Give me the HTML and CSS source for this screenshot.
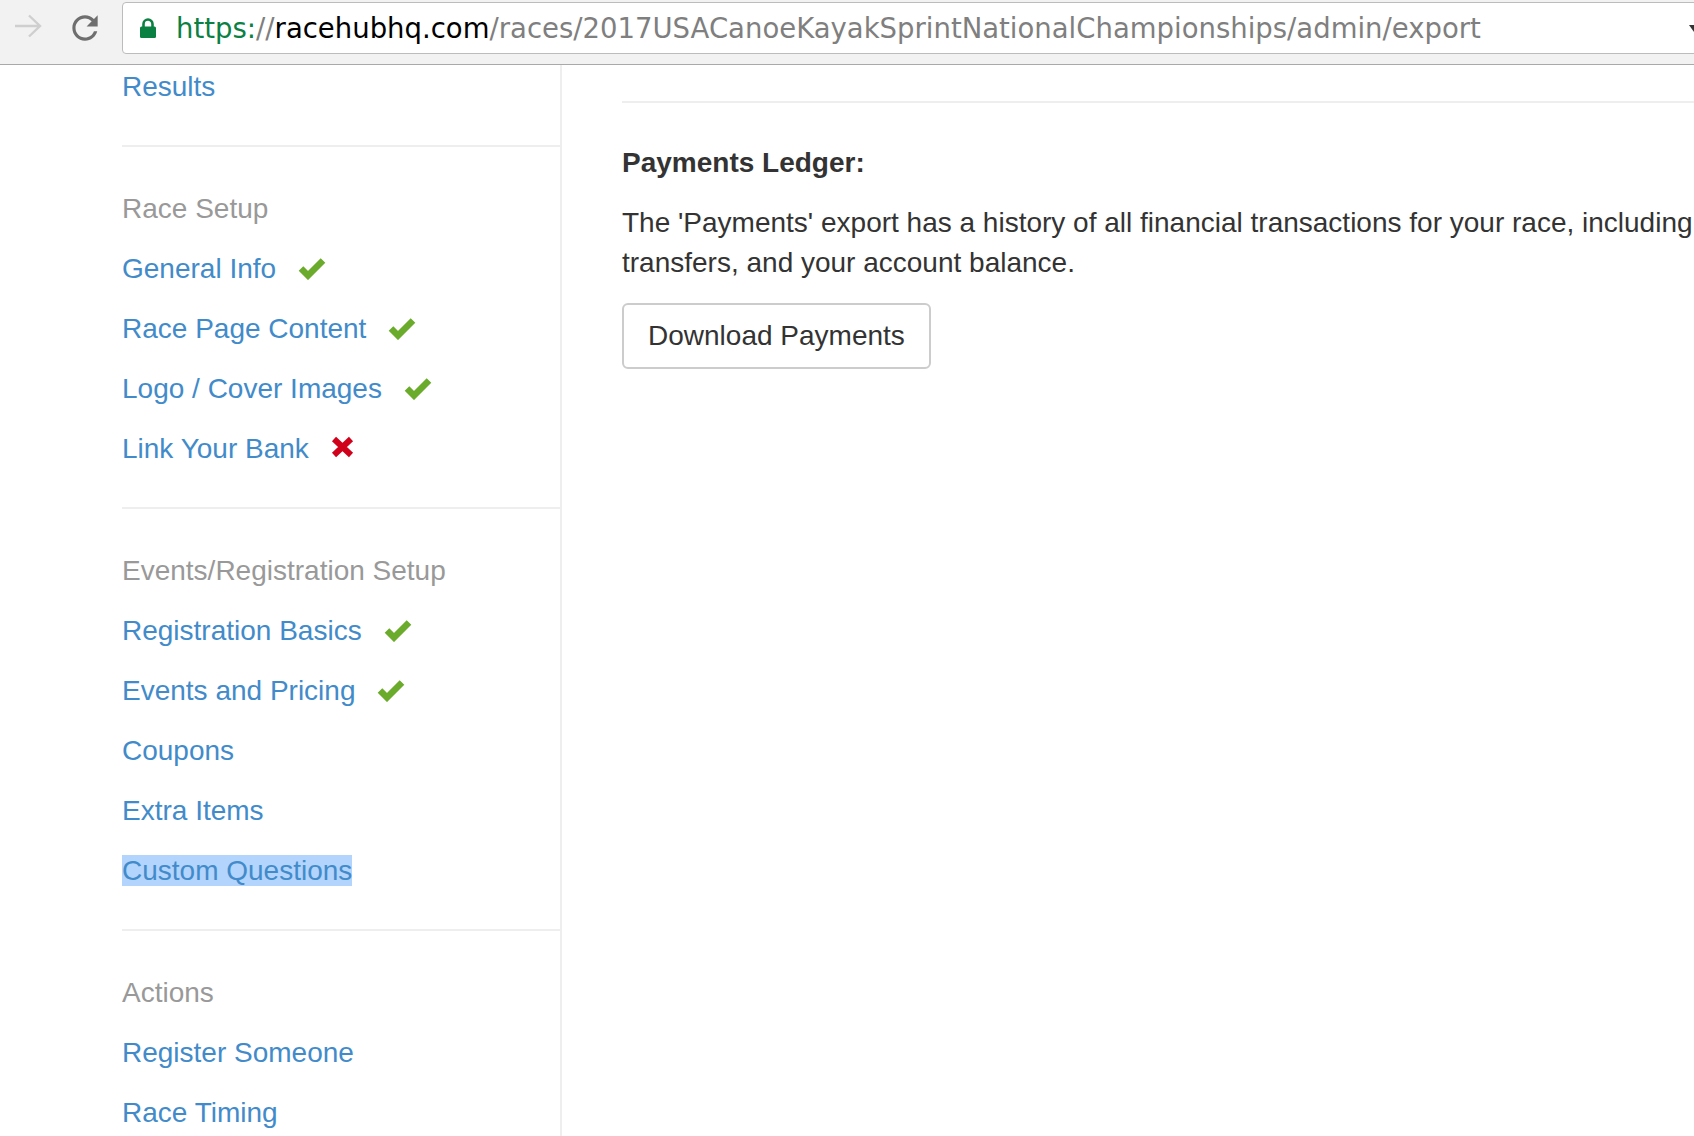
FILE: index.html
```html
<!DOCTYPE html>
<html>
<head>
  <meta charset="utf-8">
  <title>Export - RaceHubHQ</title>
  <link rel="stylesheet" href="styles.css">
</head>
<body>

  <div class="toolbar">
    <svg class="forward" width="28" height="24" viewBox="0 0 28 24">
      <path d="M1 12 H26 M15 1.5 L26 12 L15 22.5" fill="none" stroke="#cfcfcf" stroke-width="2.4"/>
    </svg>
    <svg class="reload" width="38" height="38" viewBox="0 0 24 24">
      <path fill="#6e6e6e" d="M17.65 6.35C16.2 4.9 14.21 4 12 4c-4.42 0-7.99 3.58-7.99 8s3.57 8 7.99 8c3.73 0 6.84-2.55 7.73-6h-2.08c-.82 2.33-3.04 4-5.65 4-3.31 0-6-2.69-6-6s2.69-6 6-6c1.66 0 3.14.69 4.22 1.78L13 11h7V4l-2.35 2.35z"/>
    </svg>
    <div class="omnibox">
      <svg class="lock" width="16" height="20" viewBox="0 0 16 20">
        <path d="M3.5 9.5 V6 a4.5 4.5 0 0 1 9 0 V9.5" fill="none" stroke="#0b8043" stroke-width="2.6"/>
        <rect x="0" y="8.5" width="16" height="11.5" rx="1.5" fill="#0b8043"/>
      </svg>
      <span class="url"><span class="scheme">https:</span><span class="dim">//</span><span class="host">racehubhq.com</span><span class="dim">/races/2017USACanoeKayakSprintNationalChampionships/admin/export</span></span>
      <svg class="omni-end" width="10" height="10" viewBox="0 0 10 10">
        <path d="M0 2 H10 L5 9 Z" fill="#333"/>
      </svg>
    </div>
  </div>

  <div class="viewport">
    <aside class="sidebar">
      <ul class="nav-section first">
        <li><a href="#">Results</a></li>
      </ul>

      <ul class="nav-section">
        <li class="nav-header">Race Setup</li>
        <li><a href="#">General Info</a><svg class="status ok" width="28" height="24" viewBox="0 0 28 24"><polyline points="3,12.5 10,19.5 25,4.5"/></svg></li>
        <li><a href="#">Race Page Content</a><svg class="status ok" width="28" height="24" viewBox="0 0 28 24"><polyline points="3,12.5 10,19.5 25,4.5"/></svg></li>
        <li><a href="#">Logo / Cover Images</a><svg class="status ok" width="28" height="24" viewBox="0 0 28 24"><polyline points="3,12.5 10,19.5 25,4.5"/></svg></li>
        <li><a href="#">Link Your Bank</a><svg class="status missing" width="23" height="22" viewBox="0 0 23 22"><path d="M3 3 L20 19 M20 3 L3 19"/></svg></li>
      </ul>

      <ul class="nav-section">
        <li class="nav-header">Events/Registration Setup</li>
        <li><a href="#">Registration Basics</a><svg class="status ok" width="28" height="24" viewBox="0 0 28 24"><polyline points="3,12.5 10,19.5 25,4.5"/></svg></li>
        <li><a href="#">Events and Pricing</a><svg class="status ok" width="28" height="24" viewBox="0 0 28 24"><polyline points="3,12.5 10,19.5 25,4.5"/></svg></li>
        <li><a href="#">Coupons</a></li>
        <li><a href="#">Extra Items</a></li>
        <li><a href="#"><span class="selected">Custom Questions</span></a></li>
      </ul>

      <ul class="nav-section">
        <li class="nav-header">Actions</li>
        <li><a href="#">Register Someone</a></li>
        <li><a href="#">Race Timing</a></li>
      </ul>
    </aside>

    <main class="content">
      <hr>
      <h4>Payments Ledger:</h4>
      <p>The 'Payments' export has a history of all financial transactions for your race, including registrations, refunds, payouts, transfers, and your account balance.</p>
      <button class="btn">Download Payments</button>
    </main>
  </div>

</body>
</html>
```

FILE: styles.css
```css
body {
  margin: 0;
  overflow: hidden;
  font-family: "Liberation Sans", Arial, Helvetica, sans-serif;
  color: #333;
  background-color: #fff;
}

/* browser chrome */
.toolbar {
  display: flex;
  align-items: flex-start;
  height: 64px;
  background-color: #f2f2f2;
  border-bottom: 1px solid #a9a9a9;
}
.forward {
  margin: 14px 0 0 14px;
  flex-shrink: 0;
}
.reload {
  margin: 9px 0 0 24px;
  flex-shrink: 0;
}
.omnibox {
  flex: 1;
  display: flex;
  align-items: center;
  box-sizing: border-box;
  height: 52px;
  margin: 2px -20px 0 18px;
  padding: 0 14px 0 17px;
  background-color: #fff;
  border: 1px solid #bcbcbc;
  border-radius: 4px;
}
.lock {
  flex-shrink: 0;
}
.url {
  margin-left: 20px;
  font-family: "DejaVu Sans", Verdana, sans-serif;
  font-size: 27.5px;
  white-space: nowrap;
  color: #000;
}
.url .scheme {
  color: #0b8043;
}
.url .dim {
  color: #7f7f7f;
}
.omni-end {
  margin-left: auto;
  flex-shrink: 0;
}

/* page */
.viewport {
  display: flex;
  height: 1071px;
  overflow: hidden;
}
.sidebar {
  width: 562px;
  flex-shrink: 0;
  box-sizing: border-box;
  padding-left: 122px;
  border-right: 2px solid #eee;
}
.nav-section {
  list-style: none;
  margin: 0;
  padding: 32px 0 28px;
  border-top: 2px solid #eee;
  font-size: 28px;
  line-height: 60px;
}
.nav-section.first {
  margin-top: -40px;
  border-top: none;
}
.nav-header {
  color: #999;
}
.nav-section a {
  color: #428bca;
  text-decoration: none;
}
.selected {
  background-color: #b3d4fd;
}
.status {
  margin-left: 22px;
}
.status.ok {
  vertical-align: -2px;
}
.status.ok polyline {
  fill: none;
  stroke: #6aab2b;
  stroke-width: 6.5;
}
.status.missing {
  vertical-align: 0;
}
.status.missing path {
  fill: none;
  stroke: #d0021b;
  stroke-width: 6;
}

.content {
  flex: 1;
  min-width: 0;
  padding: 36px 0 0 60px;
}
.content hr {
  margin: 0;
  border: none;
  border-top: 2px solid #eee;
}
.content h4 {
  margin: 40px 0 0;
  font-size: 28px;
  line-height: 40px;
  font-weight: bold;
  color: #333;
}
.content p {
  width: 1530px;
  margin: 20px 0;
  font-size: 28px;
  line-height: 40px;
}
.btn {
  padding: 12px 24px;
  font-family: inherit;
  font-size: 28px;
  line-height: 38px;
  color: #333;
  background-color: #fff;
  border: 2px solid #ccc;
  border-radius: 6px;
  cursor: pointer;
}
```
